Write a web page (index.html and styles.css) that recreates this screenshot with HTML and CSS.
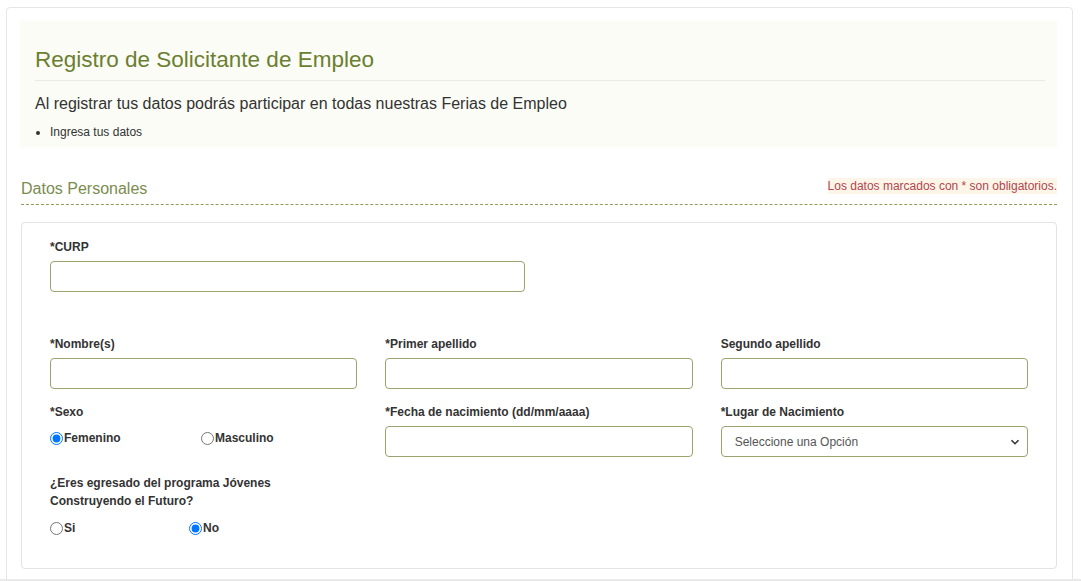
FILE: index.html
```html
<!DOCTYPE html>
<html lang="es">
<head>
  <meta charset="UTF-8" />
  <meta name="viewport" content="width=device-width, initial-scale=1.0"/>
  <title>Registro de Solicitante de Empleo</title>
  <link rel="stylesheet" href="styles.css">
</head>
<body>
  <div class="page">
    <div class="jumbotron">
      <h1>Registro de Solicitante de Empleo</h1>
      <p class="lead">Al registrar tus datos podrás participar en todas nuestras Ferias de Empleo</p>
      <ul class="steps">
        <li>Ingresa tus datos</li>
      </ul>
    </div>

    <div class="section-head">
      <h2>Datos Personales</h2>
      <span class="required-note">Los datos marcados con * son obligatorios.</span>
    </div>

    <div class="form-card">
      <div class="row two">
        <div class="field">
          <label for="curp">*CURP</label>
          <input type="text" id="curp">
        </div>
      </div>

      <div class="row three names">
        <div class="field">
          <label for="nombre">*Nombre(s)</label>
          <input type="text" id="nombre">
        </div>
        <div class="field">
          <label for="apellido1">*Primer apellido</label>
          <input type="text" id="apellido1">
        </div>
        <div class="field">
          <label for="apellido2">Segundo apellido</label>
          <input type="text" id="apellido2">
        </div>
      </div>

      <div class="row three">
        <div class="field">
          <label>*Sexo</label>
          <div class="options sexo">
            <label class="option"><input type="radio" name="sexo" checked>Femenino</label>
            <label class="option"><input type="radio" name="sexo">Masculino</label>
          </div>
        </div>
        <div class="field">
          <label for="fecha">*Fecha de nacimiento (dd/mm/aaaa)</label>
          <input type="text" id="fecha">
        </div>
        <div class="field">
          <label for="lugar">*Lugar de Nacimiento</label>
          <div class="select-wrap">
            <select id="lugar">
              <option>Seleccione una Opción</option>
            </select>
            <svg class="chevron" width="10" height="10" viewBox="0 0 10 10">
              <path d="M1.5 3.2 L5 6.7 L8.5 3.2" fill="none" stroke="#333" stroke-width="1.6"/>
            </svg>
          </div>
        </div>
      </div>

      <div class="row three jcf">
        <div class="field">
          <label>¿Eres egresado del programa Jóvenes Construyendo el Futuro?</label>
          <div class="options egresado">
            <label class="option"><input type="radio" name="jcf">Si</label>
            <label class="option"><input type="radio" name="jcf" checked>No</label>
          </div>
        </div>
      </div>
    </div>
  </div>
</body>
</html>
```

FILE: styles.css
```css
:root {
  --olive: #6b7f30;
  --olive-light: #7b8c4f;
  --field-border: #9aa46e;
  --text: #333;
}
body {
  margin: 0;
  padding: 7px 8px 0 6px;
  font-family: 'Liberation Sans', Arial, sans-serif;
  color: var(--text);
  background: #fff;
  height: 572px;
  overflow: hidden;
  border-bottom: 2px solid #e9e9e9;
}
.page {
  border: 1px solid #e6e6e6;
  border-radius: 4px;
  padding: 13px 15px 40px 13px;
}
.jumbotron {
  background: #fbfcf6;
  padding: 27px 12px 7px 15px;
}
h1 {
  margin: 0;
  font-size: 22.5px;
  line-height: 24px;
  font-weight: normal;
  color: var(--olive);
  padding-bottom: 8px;
  border-bottom: 1px solid #ebebe6;
}
.lead {
  margin: 13px 0 0;
  font-size: 16px;
  line-height: 20px;
}
.steps {
  margin: 10px 0 0;
  padding-left: 15px;
  font-size: 12px;
  line-height: 16px;
}
.section-head {
  display: flex;
  justify-content: space-between;
  align-items: flex-start;
  margin: 32px 0 0 1px;
  padding-bottom: 5px;
  border-bottom: 1px dashed #8e9b5c;
}
h2 {
  margin: 0;
  font-size: 16px;
  line-height: 20px;
  font-weight: normal;
  color: var(--olive-light);
}
.required-note {
  font-size: 12px;
  line-height: 16px;
  color: #b3444f;
  background: #fdf6e8;
  margin-top: -1px;
}
.form-card {
  margin: 17px 0 0 1px;
  border: 1px solid #e3e3e3;
  border-radius: 4px;
  padding: 16px 28px 32px;
}
.row {
  display: grid;
  column-gap: 28px;
}
.row.two {
  grid-template-columns: 1fr 1fr;
}
.row.three {
  grid-template-columns: repeat(3, 1fr);
  margin-top: 15px;
}
.row.names {
  margin-top: 44px;
}
.row.jcf {
  margin-top: 17px;
}
.field > label {
  display: block;
  font-size: 12px;
  line-height: 16px;
  font-weight: bold;
  margin-bottom: 6px;
}
.jcf .field > label {
  line-height: 18px;
  padding-right: 40px;
}
input[type="text"], select {
  box-sizing: border-box;
  width: 100%;
  height: 31px;
  border: 1px solid var(--field-border);
  border-radius: 4px;
  background: #fff;
  font-family: inherit;
  font-size: 12px;
}
select {
  appearance: none;
  padding: 0 24px 0 13px;
  color: #555;
}
.select-wrap {
  position: relative;
}
.chevron {
  position: absolute;
  right: 8px;
  top: 11px;
  pointer-events: none;
}
.options {
  display: flex;
  padding-top: 4px;
}
.option {
  display: flex;
  align-items: center;
  font-size: 12px;
  font-weight: bold;
  line-height: 16px;
}
.sexo .option {
  width: 151px;
}
.egresado .option {
  width: 139px;
}
.option input {
  margin: 0 1px 0 0;
  width: 13px;
  height: 13px;
}
```
